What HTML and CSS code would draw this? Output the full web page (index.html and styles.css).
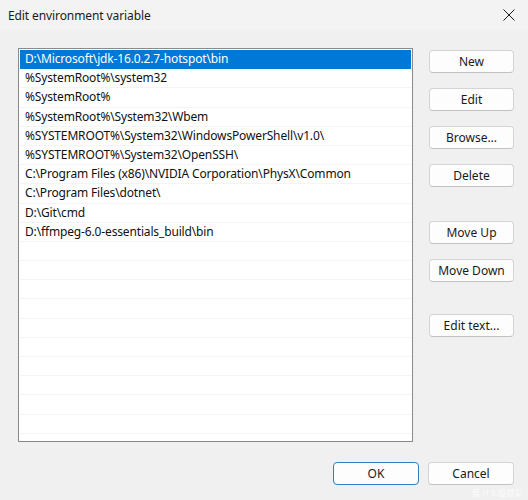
FILE: index.html
```html
<!DOCTYPE html>
<html>
<head>
<meta charset="utf-8">
<link rel="stylesheet" href="styles.css">
</head>
<body>
<div class="window">
  <div class="titlebar">
    <span class="title">Edit environment variable</span>
    <svg class="close" width="12" height="12" viewBox="0 0 12 12"><path d="M0.5 0.5 L11.5 11.5 M11.5 0.5 L0.5 11.5" stroke="#1a1a1a" stroke-width="1" fill="none"/></svg>
  </div>
  <div class="content">
    <div class="list">
      <div class="row selected">D:\Microsoft\jdk-16.0.2.7-hotspot\bin</div>
      <div class="row">%SystemRoot%\system32</div>
      <div class="row">%SystemRoot%</div>
      <div class="row">%SystemRoot%\System32\Wbem</div>
      <div class="row">%SYSTEMROOT%\System32\WindowsPowerShell\v1.0\</div>
      <div class="row">%SYSTEMROOT%\System32\OpenSSH\</div>
      <div class="row">C:\Program Files (x86)\NVIDIA Corporation\PhysX\Common</div>
      <div class="row">C:\Program Files\dotnet\</div>
      <div class="row">D:\Git\cmd</div>
      <div class="row">D:\ffmpeg-6.0-essentials_build\bin</div>
      <div class="row"></div>
      <div class="row"></div>
      <div class="row"></div>
      <div class="row"></div>
      <div class="row"></div>
      <div class="row"></div>
      <div class="row"></div>
      <div class="row"></div>
      <div class="row"></div>
      <div class="row"></div>
    </div>
    <div class="side">
      <button class="btn b-new">New</button>
      <button class="btn b-edit">Edit</button>
      <button class="btn b-browse">Browse...</button>
      <button class="btn b-delete">Delete</button>
      <button class="btn b-up">Move Up</button>
      <button class="btn b-down">Move Down</button>
      <button class="btn b-text">Edit text...</button>
    </div>
  </div>
  <div class="footer">
    <button class="btn ok">OK</button>
    <button class="btn cancel">Cancel</button>
    <span class="watermark">值 什么值得买</span>
  </div>
</div>
</body>
</html>
```

FILE: styles.css
```css
html, body {
  margin: 0;
  padding: 0;
  background: #f0f0f0;
}
body {
  font-family: "Noto Sans", "Open Sans", "Noto Sans CJK SC", sans-serif;
  font-size: 12px;
  color: #000;
}
.window {
  width: 528px;
  height: 500px;
  background: #f0f0f0;
  position: relative;
  overflow: hidden;
}
.titlebar {
  height: 30px;
  display: flex;
  align-items: center;
  justify-content: space-between;
  padding: 0 13px 0 8px;
  background: #f3f3f3;
}
.title {
  font-size: 12px;
  color: #1a1a1a;
  letter-spacing: -0.1px;
}
.close {
  display: block;
}
.content {
  display: grid;
  grid-template-columns: 395px 85px;
  column-gap: 16px;
  padding: 18px 14px 0 18px;
}
.list {
  height: 394px;
  box-sizing: border-box;
  border: 1px solid #8a8a8a;
  background: #fff;
  padding: 1px;
  overflow: hidden;
}
.row {
  height: 19.2px;
  box-sizing: border-box;
  border-bottom: 1px solid #f4f4f4;
  padding-left: 5px;
  line-height: 18px;
  white-space: nowrap;
  font-size: 12px;
  letter-spacing: -0.15px;
  color: #111;
}
.row.selected {
  background: #0078d7;
  color: #fff;
  border-bottom-color: #0078d7;
}
.side {
  display: flex;
  flex-direction: column;
  padding-top: 2px;
}
.btn {
  font-family: inherit;
  font-size: 12px;
  color: #1a1a1a;
  height: 23px;
  box-sizing: border-box;
  background: #fdfdfd;
  border: 1px solid #d4d4d4;
  border-bottom-color: #c2c2c2;
  border-radius: 4px;
  padding: 0;
  line-height: 20px;
}
.side .btn {
  width: 85px;
}
.b-edit, .b-browse, .b-delete, .b-down {
  margin-top: 15px;
}
.b-up {
  margin-top: 34px;
}
.b-text {
  margin-top: 32px;
}
.footer {
  display: flex;
  justify-content: flex-end;
  gap: 9px;
  padding: 20px 14px 0 0;
  position: relative;
}
.ok {
  width: 86px;
  border: 1.5px solid #2f7ec8;
}
.cancel {
  width: 86px;
}
.watermark {
  position: absolute;
  right: 6px;
  top: 46px;
  font-size: 8px;
  line-height: 10px;
  color: #ffffff;
  opacity: 0.85;
}
```
